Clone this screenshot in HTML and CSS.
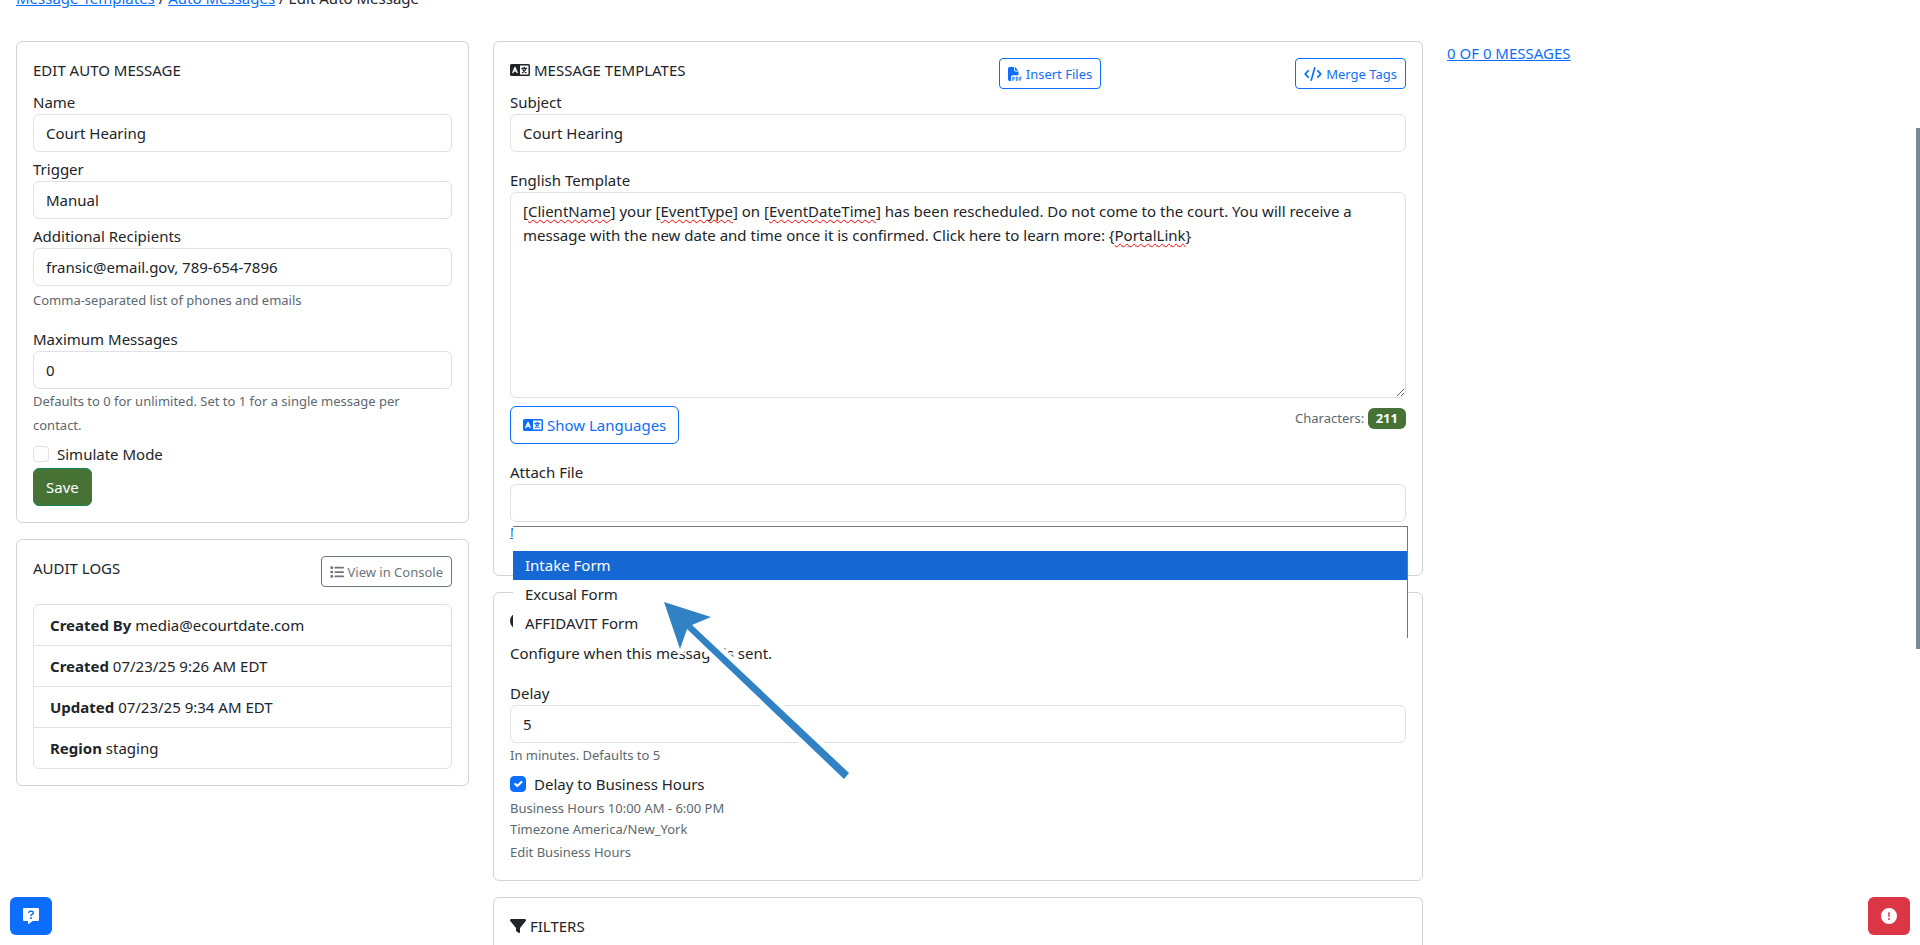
FILE: index.html
```html
<!DOCTYPE html>
<html lang="en">
<head>
    <meta charset="UTF-8">
    <meta name="viewport" content="width=device-width, initial-scale=1.0">
    <title>Edit Auto Message</title>
    <link rel="stylesheet" href="styles.css">
</head>
<body>
    <!-- shared icons -->
    <svg class="sprite" aria-hidden="true">
        <symbol id="icon-language" viewBox="0 0 640 512">
            <path fill="currentColor" fill-rule="evenodd" d="M48 64h544a48 48 0 0 1 48 48v288a48 48 0 0 1-48 48H48a48 48 0 0 1-48-48V112a48 48 0 0 1 48-48zM320 112v288h272V112z"/>
            <path fill="none" stroke="#fff" stroke-width="44" stroke-linecap="round" stroke-linejoin="round" d="M92 336l68-160 68 160M116 292h88"/>
            <path fill="none" stroke="currentColor" stroke-width="38" stroke-linecap="round" stroke-linejoin="round" d="M456 160v32M380 204h152M508 208c-14 56-52 106-112 132M412 244c20 42 56 76 104 96"/>
        </symbol>
        <symbol id="icon-file-pdf" viewBox="0 0 512 512">
            <path fill="currentColor" d="M0 64C0 28.700 28.700 0 64 0h160v128c0 17.700 14.300 32 32 32h128v144H176c-35.300 0-64 28.700-64 64v144H64c-35.300 0-64-28.700-64-64zM384 128H256V0z"/>
            <path fill="none" stroke="currentColor" stroke-width="32" d="M176 512V368h24a40 40 0 0 1 0 80h-24M304 368v128h20c22 0 36-16 36-40v-48c0-24-14-40-36-40zM432 512V368h72M432 436h60"/>
        </symbol>
        <symbol id="icon-code" viewBox="0 0 640 512">
            <path fill="currentColor" d="M392.800 1.200c-17-4.900-34.700 5-39.600 22l-128 448c-4.900 17 5 34.700 22 39.600s34.700-5 39.600-22l128-448c4.900-17-5-34.700-22-39.600zm80.600 120.100c-12.500 12.500-12.500 32.800 0 45.300L562.700 256l-89.400 89.400c-12.500 12.500-12.500 32.800 0 45.300s32.800 12.500 45.300 0l112-112c12.500-12.500 12.500-32.800 0-45.300l-112-112c-12.500-12.500-32.800-12.500-45.300 0zm-306.700 0c-12.500-12.500-32.800-12.500-45.300 0l-112 112c-12.500 12.500-12.500 32.800 0 45.300l112 112c12.500 12.500 32.800 12.500 45.300 0s12.500-32.800 0-45.300L77.300 256l89.400-89.400c12.500-12.500 12.500-32.800 0-45.300z"/>
        </symbol>
        <symbol id="icon-list" viewBox="0 0 512 512">
            <path fill="currentColor" d="M40 48h48a24 24 0 0 1 24 24v48a24 24 0 0 1-24 24H40a24 24 0 0 1-24-24V72a24 24 0 0 1 24-24zM40 208h48a24 24 0 0 1 24 24v48a24 24 0 0 1-24 24H40a24 24 0 0 1-24-24v-48a24 24 0 0 1 24-24zM40 368h48a24 24 0 0 1 24 24v48a24 24 0 0 1-24 24H40a24 24 0 0 1-24-24v-48a24 24 0 0 1 24-24zM192 64h288a32 32 0 0 1 0 64H192a32 32 0 0 1 0-64zM192 224h288a32 32 0 0 1 0 64H192a32 32 0 0 1 0-64zM192 384h288a32 32 0 0 1 0 64H192a32 32 0 0 1 0-64z"/>
        </symbol>
        <symbol id="icon-filter" viewBox="0 0 512 512">
            <path fill="currentColor" d="M3.900 54.900C10.500 40.900 24.500 32 40 32H472c15.500 0 29.500 8.900 36.100 22.900s4.600 30.500-5.200 42.500L320 320.900V448c0 12.100-6.800 23.200-17.700 28.600s-23.800 4.300-33.500-3l-64-48c-8.100-6-12.800-15.500-12.800-25.600V320.900L9 97.300C-.7 85.400-2.800 68.800 3.900 54.900z"/>
        </symbol>
        <symbol id="icon-clock" viewBox="0 0 512 512">
            <path fill="currentColor" fill-rule="evenodd" d="M256 0a256 256 0 1 1 0 512 256 256 0 1 1 0-512zM232 120v136c0 8 4 15 11 20l96 64 26-40-85-57V120z"/>
        </symbol>
        <symbol id="icon-question" viewBox="0 0 512 512">
            <path fill="currentColor" d="M32 0h448a32 32 0 0 1 32 32v352a32 32 0 0 1-32 32H310L180 510c-8 6-20 1-20-10v-84H32a32 32 0 0 1-32-32V32A32 32 0 0 1 32 0z"/>
            <path fill="none" stroke="#0d6efd" stroke-width="48" stroke-linecap="round" d="M184 140c8-26 22-36 44-36h52c28 0 50 22 50 50 0 38-40 42-72 70v14"/>
            <circle cx="256" cy="320" r="32" fill="#0d6efd"/>
        </symbol>
        <symbol id="icon-alert" viewBox="0 0 512 512">
            <path fill="currentColor" d="M256 512A256 256 0 1 0 256 0a256 256 0 1 0 0 512zm0-384c13.300 0 24 10.700 24 24V264c0 13.300-10.700 24-24 24s-24-10.700-24-24V152c0-13.300 10.700-24 24-24zM224 352a32 32 0 1 1 64 0 32 32 0 1 1 -64 0z"/>
        </symbol>
    </svg>

    <main class="page">
        <nav class="breadcrumb" aria-label="breadcrumb">
            <a href="#">Message Templates</a> / <a href="#">Auto Messages</a> / Edit Auto Message
        </nav>

        <div class="row">
            <div class="col col-side">
                <form class="card">
                    <h1 class="card-title">EDIT AUTO MESSAGE</h1>
                    <div class="field">
                        <label for="name">Name</label>
                        <input class="control" type="text" id="name" value="Court Hearing">
                    </div>
                    <div class="field">
                        <label for="trigger">Trigger</label>
                        <select class="control" id="trigger">
                            <option>Manual</option>
                        </select>
                    </div>
                    <div class="field field-spaced">
                        <label for="recipients">Additional Recipients</label>
                        <input class="control" type="text" id="recipients" value="fransic@email.gov, 789-654-7896">
                        <div class="form-text">Comma-separated list of phones and emails</div>
                    </div>
                    <div class="field">
                        <label for="max">Maximum Messages</label>
                        <input class="control" type="text" id="max" value="0">
                        <div class="help">Defaults to 0 for unlimited. Set to 1 for a single message per contact.</div>
                    </div>
                    <div class="check">
                        <input type="checkbox" id="simulate">
                        <label for="simulate">Simulate Mode</label>
                    </div>
                    <button class="btn btn-success" type="submit">Save</button>
                </form>

                <section class="card">
                    <div class="card-header">
                        <h2 class="card-title">AUDIT LOGS</h2>
                        <button class="btn btn-sm btn-outline-secondary" type="button"><svg class="icon icon-sm"><use href="#icon-list"/></svg>View in Console</button>
                    </div>
                    <ul class="list-group">
                        <li><strong>Created By</strong> media@ecourtdate.com</li>
                        <li><strong>Created</strong> 07/23/25 9:26 AM EDT</li>
                        <li><strong>Updated</strong> 07/23/25 9:34 AM EDT</li>
                        <li><strong>Region</strong> staging</li>
                    </ul>
                </section>
            </div>

            <div class="col col-main">
                <section class="card">
                    <div class="card-header template-header">
                        <h2 class="card-title"><svg class="icon icon-wide"><use href="#icon-language"/></svg>MESSAGE TEMPLATES</h2>
                        <div class="toolbar">
                            <button class="btn btn-sm btn-outline-primary" type="button"><svg class="icon icon-sm"><use href="#icon-file-pdf"/></svg>Insert Files</button>
                            <button class="btn btn-sm btn-outline-primary" type="button"><svg class="icon icon-code"><use href="#icon-code"/></svg>Merge Tags</button>
                        </div>
                    </div>
                    <div class="field field-spaced">
                        <label for="subject">Subject</label>
                        <input class="control" type="text" id="subject" value="Court Hearing">
                    </div>
                    <label for="template">English Template</label>
                    <div class="editor">
                        <!-- same text as the textarea, only carries the spelling marks -->
                        <div class="spelling" aria-hidden="true">[<u>ClientName</u>] your [<u>EventType</u>] on [<u>EventDateTime</u>] has been rescheduled. Do not come to the court. You will receive a message with the new date and time once it is confirmed. Click here to learn more: {<u>PortalLink</u>}</div>
                        <textarea class="control" id="template" spellcheck="false">[ClientName] your [EventType] on [EventDateTime] has been rescheduled. Do not come to the court. You will receive a message with the new date and time once it is confirmed. Click here to learn more: {PortalLink}</textarea>
                    </div>
                    <div class="editor-footer">
                        <button class="btn btn-outline-primary" type="button"><svg class="icon icon-wide"><use href="#icon-language"/></svg>Show Languages</button>
                        <div class="counter">Characters: <span class="badge">211</span></div>
                    </div>
                    <div class="attach">
                        <label for="attach">Attach File</label>
                        <select class="control" id="attach">
                            <option></option>
                        </select>
                        <a class="attach-link" href="#">Manage Files</a>
                        <ul class="menu" role="listbox" aria-label="Attach File">
                            <li class="menu-empty" role="option"></li>
                            <li class="active" role="option" aria-selected="true">Intake Form</li>
                            <li role="option">Excusal Form</li>
                            <li role="option">AFFIDAVIT Form</li>
                        </ul>
                        <svg class="pointer" viewBox="0 0 200 200" aria-hidden="true">
                            <path d="M8 8L55 23L36 31L193 179L188 185L31 35L24 55Z"/>
                        </svg>
                    </div>
                </section>

                <section class="card">
                    <h2 class="card-title"><svg class="icon"><use href="#icon-clock"/></svg>TIMING</h2>
                    <p class="intro">Configure when this message is sent.</p>
                    <div class="field">
                        <label for="delay">Delay</label>
                        <input class="control" type="text" id="delay" value="5">
                        <div class="help">In minutes. Defaults to 5</div>
                    </div>
                    <div class="check">
                        <input type="checkbox" id="business" checked>
                        <label for="business">Delay to Business Hours</label>
                    </div>
                    <div class="hours">Business Hours 10:00 AM - 6:00 PM<br>Timezone America/New_York</div>
                    <a class="help hours-link" href="#">Edit Business Hours</a>
                </section>

                <section class="card">
                    <h2 class="card-title"><svg class="icon"><use href="#icon-filter"/></svg>FILTERS</h2>
                </section>
            </div>

            <div class="col col-side">
                <a href="#">0 OF 0 MESSAGES</a>
            </div>
        </div>
    </main>

    <div class="scroll-thumb"></div>
    <button class="btn floating floating-help" type="button" aria-label="Help"><svg class="icon"><use href="#icon-question"/></svg></button>
    <button class="btn floating floating-report" type="button" aria-label="Report a problem"><svg class="icon"><use href="#icon-alert"/></svg></button>
</body>
</html>
```
FILE: styles.css
```css
* {
    box-sizing: border-box;
}
body {
    margin: 0;
    height: 100vh;
    overflow: hidden;
    font-family: "Noto Sans", "Open Sans", sans-serif;
    font-size: 15px;
    line-height: 24px;
    color: #212529;
    background-color: #fff;
}
a {
    color: #0d6efd;
}
.sprite {
    display: none;
}
.page {
    margin-top: -14px;
    padding: 0 8px 0 4px;
}
.breadcrumb {
    margin: 0 12px 31px;
}
.row {
    display: flex;
    align-items: flex-start;
}
.col {
    padding: 0 12px;
}
.col-side {
    width: 25%;
}
.col-main {
    width: 50%;
}
.card {
    margin-bottom: 16px;
    padding: 16px;
    border: 1px solid #d3d3d4;
    border-radius: 6px;
    background-color: #fff;
}
.card-title {
    display: flex;
    align-items: center;
    gap: 4px;
    margin: 0 0 8px;
    font-size: 15px;
    font-weight: 400;
    line-height: 24px;
}
.card-header {
    display: flex;
    justify-content: space-between;
    align-items: flex-start;
    min-height: 32px;
}
.card-header .card-title {
    margin-bottom: 0;
}
.template-header {
    display: grid;
    grid-template-columns: 6fr 5fr;
}
.toolbar {
    display: flex;
    justify-content: space-between;
}

/* forms */
label {
    display: block;
}
.field {
    margin-bottom: 5px;
}
.field-spaced {
    margin-bottom: 16px;
}
.control {
    display: block;
    width: 100%;
    height: 38px;
    padding: 6px 12px;
    border: 1px solid #dee2e6;
    border-radius: 6px;
    appearance: none;
    background-color: #fff;
    color: #212529;
    font: inherit;
}
.form-text {
    margin-top: 4px;
    font-size: 13px;
    line-height: 21px;
    color: #5d686f;
}
.help {
    padding-right: 16px;
    font-size: 13px;
    color: #5d686f;
}
.check {
    display: flex;
    align-items: center;
    gap: 8px;
    margin-bottom: 2px;
}
.check input {
    width: 16px;
    height: 16px;
    margin: 0;
    border: 1px solid #dee2e6;
    border-radius: 4px;
    appearance: none;
}
.check input:checked {
    border-color: #0d6efd;
    background: #0d6efd url("data:image/svg+xml,%3Csvg xmlns='http://www.w3.org/2000/svg' viewBox='0 0 20 20'%3E%3Cpath fill='none' stroke='%23fff' stroke-linecap='round' stroke-linejoin='round' stroke-width='3' d='m6 10 3 3 6-6'/%3E%3C/svg%3E");
}

/* buttons */
.btn {
    display: inline-flex;
    align-items: center;
    gap: 4px;
    height: 38px;
    padding: 0 12px;
    border: 1px solid transparent;
    border-radius: 6px;
    background-color: #fff;
    font: inherit;
    cursor: pointer;
}
.btn-sm {
    height: 31px;
    padding: 0 8px;
    border-radius: 4px;
    font-size: 13px;
}
.btn-success {
    border-color: #198754;
    background-color: #467235;
    color: #fff;
}
.btn-outline-primary {
    border-color: #0d6efd;
    color: #0d6efd;
}
.btn-outline-secondary {
    border-color: #6c757d;
    color: #6c757d;
}
.icon {
    flex: none;
    width: 16px;
    height: 16px;
}
.icon-sm {
    width: 14px;
    height: 14px;
}
.icon-code {
    width: 18px;
    height: 14px;
}
.icon-wide {
    width: 20px;
}

/* audit logs */
.list-group {
    margin: 16px 0 0;
    padding: 0;
    border: 1px solid #dee2e6;
    border-radius: 6px;
    list-style: none;
}
.list-group li {
    padding: 8px 16px;
}
.list-group li + li {
    border-top: 1px solid #dee2e6;
}

/* template editor */
.editor {
    position: relative;
    margin-bottom: 8px;
}
.editor textarea {
    height: 206px;
    resize: vertical;
}
.spelling {
    position: absolute;
    inset: 0;
    padding: 7px 13px;
    color: transparent;
    pointer-events: none;
}
.spelling u {
    text-decoration: underline wavy #f00 1px;
    text-decoration-skip-ink: none;
    text-underline-offset: 2px;
}
.editor-footer {
    display: flex;
    justify-content: space-between;
    align-items: flex-start;
    margin-bottom: 16px;
}
.counter {
    font-size: 13px;
    color: #5d686f;
}
.badge {
    display: inline-block;
    padding: 0 8px;
    border-radius: 6px;
    background-color: #467235;
    color: #fff;
    font-weight: 700;
    line-height: 21px;
}
.attach {
    position: relative;
    margin-bottom: 16px;
}
.attach-link {
    display: block;
    font-size: 13px;
    line-height: 21px;
}
.menu {
    position: absolute;
    z-index: 2;
    top: 66px;
    left: 3px;
    right: -2px;
    margin: 0;
    padding: 0;
    border-top: 1px solid #767676;
    border-right: 1px solid #767676;
    background-color: #fff;
    list-style: none;
}
.menu li {
    height: 29px;
    padding: 0 12px;
    line-height: 29px;
}
.menu .menu-empty {
    height: 24px;
}
.menu .active {
    background-color: #1567d3;
    color: #fff;
}
.pointer {
    position: absolute;
    z-index: 3;
    top: 134px;
    left: 146px;
    width: 200px;
    height: 200px;
    pointer-events: none;
}
.pointer path {
    fill: #3182c4;
    stroke: #fff;
    stroke-width: 10px;
    stroke-linejoin: round;
    paint-order: stroke;
}

/* timing */
.intro {
    margin: 0 0 16px;
}
.hours {
    font-size: 13px;
    line-height: 21px;
    color: #5d686f;
}
.hours-link {
    display: block;
    text-decoration: none;
}

/* fixed to the window */
.floating {
    position: fixed;
    bottom: 10px;
    color: #fff;
}
.floating-help {
    left: 10px;
    background-color: #0d6efd;
}
.floating-report {
    right: 10px;
    background-color: #dc3545;
}
.scroll-thumb {
    position: fixed;
    top: 128px;
    right: 0;
    width: 4px;
    height: 521px;
    background-color: #788a95;
}
```
